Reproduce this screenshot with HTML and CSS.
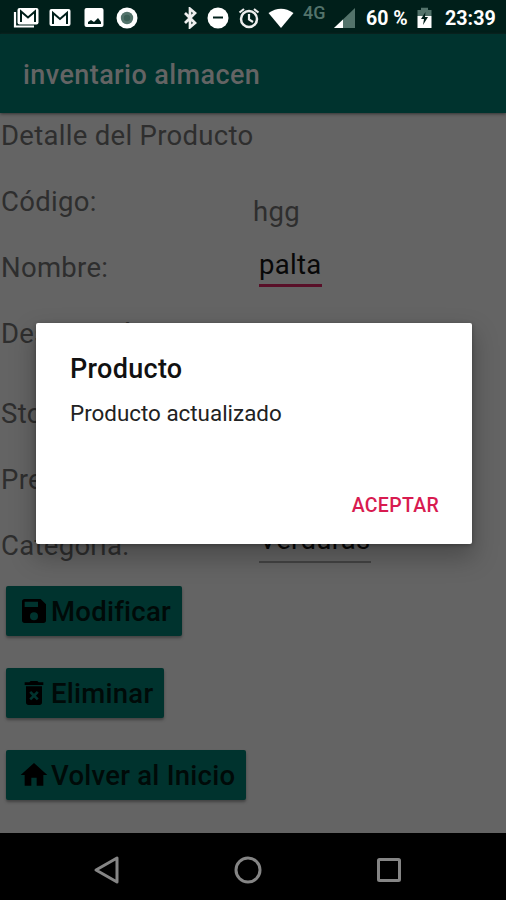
FILE: index.html
```html
<!DOCTYPE html>
<html lang="es">
<head>
<meta charset="utf-8">
<title>inventario almacen</title>
<link rel="stylesheet" href="styles.css">
</head>
<body>
<div class="phone">
  <header class="status">
    <div class="status-left">
      <svg width="26" height="22" viewBox="0 0 26 22"><path d="M2 5v14.5h19" fill="none" stroke="#fff" stroke-width="2.2"/><rect x="4.5" y="1" width="21" height="16.5" rx="2" fill="#fff"/><path d="M8 15V4.5l7 6 7-6V15" fill="none" stroke="#001f1a" stroke-width="2"/></svg>
      <svg class="mail" width="22" height="22" viewBox="0 0 22 22"><rect x=".5" y="2" width="21" height="17" rx="2" fill="#fff"/><path d="M4 17V6l7 6 7-6v11" fill="none" stroke="#001f1a" stroke-width="2"/></svg>
      <svg class="photo" width="20" height="22" viewBox="0 0 20 22"><rect x=".5" y="1" width="19" height="19" rx="2" fill="#fff"/><path d="M4 17v-2l3-2 3 2 4-4 3 4v2z" fill="#001f1a"/></svg>
      <svg class="disc" width="22" height="22" viewBox="0 0 22 22"><circle cx="11" cy="11" r="10.5" fill="#fff"/><circle cx="11" cy="11" r="6.2" fill="#53736b"/><circle cx="11" cy="11" r="3.2" fill="#3d6057"/></svg>
    </div>
    <div class="status-right">
      <svg width="13" height="22" viewBox="0 0 13 22"><path d="M1 6l10 10-5 4.2V1.8L11 6 1 16" fill="none" stroke="#eee" stroke-width="2.7"/></svg>
      <svg class="dnd" width="22" height="22" viewBox="0 0 22 22"><circle cx="11" cy="11" r="10.5" fill="#fff"/><path d="M6 10.500h10" stroke="#001f1a" stroke-width="2"/></svg>
      <svg class="alarm" width="22" height="22" viewBox="0 0 22 22"><circle cx="11" cy="12" r="8" fill="none" stroke="#eee" stroke-width="2.500"/><path d="M11 7v5.500l4 2.500M1.500 5.500L6 2M20.500 5.500L16 2" fill="none" stroke="#eee" stroke-width="2.200"/></svg>
      <svg class="wifi" width="26" height="22" viewBox="0 0 26 22"><path d="M.5 6Q13-2.500 25.500 6L13 21z" fill="#fff"/></svg>
      <span class="net">4G</span>
      <svg class="signal" width="21" height="22" viewBox="0 0 21 22"><path d="M0 21L21 1v20z" fill="#53736b"/><path d="M0 21l9-8.600V21z" fill="#fff"/></svg>
      <span class="percent">60 %</span>
      <svg class="battery" width="15" height="22" viewBox="0 0 15 22"><path d="M.5 3H4V.8h7V3h3.500v6H.5z" fill="#53736b"/><path d="M.5 9h14v12H.5z" fill="#fff"/><path d="M8.500 5L4 12h3l-1 6 5-8H8z" fill="#001f1a"/></svg>
      <span class="clock">23:39</span>
    </div>
  </header>
  <div class="appbar">inventario almacen</div>
  <main class="content">
    <div class="row">Detalle del Producto</div>
    <div class="row"><span class="label">Código:</span><span class="value code">hgg</span></div>
    <div class="row"><span class="label">Nombre:</span><span class="value field active">palta</span></div>
    <div class="row tall"><span class="label">Descripción:</span></div>
    <div class="row"><span class="label">Stock:</span></div>
    <div class="row"><span class="label">Precio:</span></div>
    <div class="row last"><span class="label">Categoria:</span><span class="value field category">Verduras</span></div>
    <div class="actions">
      <div class="button modify"><svg width="32" height="32" viewBox="0 0 24 24"><path d="M17 3H5a2 2 0 0 0-2 2v14a2 2 0 0 0 2 2h14a2 2 0 0 0 2-2V7zM12 19a3 3 0 1 1 0-6 3 3 0 0 1 0 6zM15 9H5V5h10z"/></svg><span>Modificar</span></div>
      <div class="button remove"><svg width="32" height="32" viewBox="0 0 24 24"><path d="M6 19a2 2 0 0 0 2 2h8a2 2 0 0 0 2-2V7H6zM8.460 11.880l1.410-1.410L12 12.590l2.120-2.120 1.410 1.410L13.410 14l2.120 2.120-1.410 1.410L12 15.410l-2.120 2.120-1.410-1.410L10.590 14zM15.500 4l-1-1h-5l-1 1H5v2h14V4z"/></svg><span>Eliminar</span></div>
      <div class="button home"><svg width="32" height="32" viewBox="0 0 24 24"><path d="M10 20v-6h4v6h5v-8h3L12 3 2 12h3v8z"/></svg><span>Volver al Inicio</span></div>
    </div>
  </main>
  <nav class="nav">
    <svg width="28" height="30" viewBox="0 0 28 30"><path d="M24 3v24L3 15z" fill="none" stroke="#858585" stroke-width="3" stroke-linejoin="round"/></svg>
    <svg width="28" height="30" viewBox="0 0 28 30"><circle cx="14" cy="15" r="12" fill="none" stroke="#858585" stroke-width="3"/></svg>
    <svg width="28" height="30" viewBox="0 0 28 30"><rect x="3.500" y="4.500" width="21" height="21" rx="1" fill="none" stroke="#858585" stroke-width="3"/></svg>
  </nav>
  <section class="dialog">
    <h1>Producto</h1>
    <p>Producto actualizado</p>
    <div class="accept">ACEPTAR</div>
  </section>
</div>
</body>
</html>
```
FILE: styles.css
```css
* { box-sizing: border-box; }
body { margin: 0; font-family: Roboto, sans-serif; }
svg { display: block; flex: none; }
.phone { position: relative; width: 506px; height: 900px; overflow: hidden; background: #646464; display: flex; flex-direction: column; }
.status { height: 34px; flex: none; background: #001f1a; color: #fff; display: flex; justify-content: space-between; align-items: center; padding: 1px 11px 0 13px; }
.status-left, .status-right { display: flex; align-items: center; }
.mail { margin-left: 10px; }
.photo { margin-left: 13px; }
.disc { margin-left: 12px; }
.dnd { margin-left: 10px; }
.alarm { margin-left: 9px; }
.wifi { margin-left: 8px; }
.net { width: 24px; margin: -9px 0 0 9px; font-size: 18px; line-height: 22px; font-weight: 500; color: #53736b; white-space: nowrap; }
.signal { margin-left: 7px; }
.percent { width: 42px; margin-left: 11px; font-size: 19.5px; line-height: 24px; font-weight: 700; white-space: nowrap; margin-top: 2px; }
.battery { margin-left: 9px; }
.clock { width: 50px; margin-left: 13px; font-size: 19.7px; line-height: 24px; font-weight: 700; margin-top: 2px; }
.appbar { height: 79px; flex: none; background: #00332e; color: #646464; font-size: 27px; letter-spacing: .42px; font-weight: 500; line-height: 82px; padding-left: 23px; box-shadow: 0 1px 3px #333; }
.content { flex: 1; color: #2e2e2e; font-size: 27.5px; letter-spacing: .3px; }
.row { height: 66px; display: grid; grid-template-columns: 252px 1fr; grid-auto-rows: 45px; line-height: 45px; padding-left: 1px; white-space: nowrap; }
.row:first-child { display: block; }
.tall { height: 80px; }
.last { height: 63px; }
.value { justify-self: start; }
.code { padding-top: 10px; }
.field { margin-left: 6px; color: #080808; line-height: 40px; height: 42px; border-bottom: 3px solid #590f28; }
.category { height: 40px; line-height: 33px; border-bottom: 2px solid #444; }
.actions { display: flex; flex-direction: column; align-items: flex-start; gap: 32px; padding-left: 6px; }
.button { height: 50px; display: flex; align-items: center; padding-left: 12px; border-radius: 2px; background: #00332e; color: #000a08; font-weight: 500; letter-spacing: .25px; white-space: nowrap; box-shadow: 0 2px 3px rgba(0,0,0,.35); }
.button span { margin-left: 1px; line-height: 53px; padding-top: 1px; }
.modify { width: 176px; }
.remove { width: 158px; }
.home { width: 240px; }
.nav { height: 67px; flex: none; background: #000; display: flex; justify-content: center; align-items: center; gap: 113px; padding: 7px 10px 0 0; }
.dialog { position: absolute; left: 36px; top: 323px; width: 436px; height: 221px; background: #fff; border-radius: 2px; padding: 28px 33px 0 34px; box-shadow: 0 12px 24px 2px rgba(0,0,0,.25), 0 1px 4px rgba(0,0,0,.3); }
h1 { margin: 0; font-size: 27px; letter-spacing: .3px; line-height: 37px; font-weight: 500; color: #111; }
p { margin: 10px 0 0; font-size: 22.4px; line-height: 30px; color: #222; }
.accept { margin-top: 63px; text-align: right; font-size: 19.5px; letter-spacing: .3px; line-height: 30px; font-weight: 500; color: #d81b50; }
```
